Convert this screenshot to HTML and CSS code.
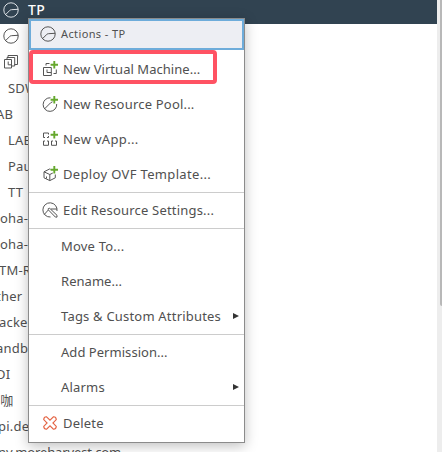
FILE: index.html
```html
<!DOCTYPE html>
<html lang="en">
<head>
<meta charset="utf-8">
<title>Actions</title>
<link rel="stylesheet" href="styles.css">
</head>
<body>
<svg class="defs" width="0" height="0">
  <symbol id="pool" viewBox="0 0 16 16"><circle cx="8" cy="8" r="7.2"/><path d="M2.4 12.8 7 8.2Q7.6 7.7 8.4 7.7L15.2 7.3"/></symbol>
  <symbol id="pool-new" viewBox="0 0 16 16"><path d="M8.5 1.8A6.8 6.8 0 1 0 14.7 8M2.4 13 8.6 6.8 10.5 5.8"/><path class="plus" d="M12.3 0v7.4M8.6 3.7H16"/></symbol>
  <symbol id="vms" viewBox="0 0 16 16"><path d="M5 3.5v-2h9.5v9h-3M1.5 5.5h7v8.5h-7zM4 5.5v-2h7.7v8.5H8.5M5.2 7.5v3.3h3.3"/></symbol>
  <symbol id="vm-new" viewBox="0 0 16 16"><path d="M4 4.5v-2h3.5M1.5 6.5h7.8v8H1.5zM5 8.5v3h4.3M11.5 12.5h2.8V8.5"/><path class="plus" d="M12.3 0v7.4M8.6 3.7H16"/></symbol>
  <symbol id="vapp" viewBox="0 0 16 16"><path d="M6.5 3.5V2H1.5v4.5H3M5 6.5h1.5V5M3 10H1.5v4.3h5V10H5M11 10H9.5v4.3h5V10H13"/><path class="plus" d="M12.3 0v7.4M8.6 3.7H16"/></symbol>
  <symbol id="ovf" viewBox="0 0 16 16"><path d="M8.5 3.3 7.6 3 2 5.8v6l5.8 2.8 5.5-2.8V8.5M2 5.8l5.8 2.7 3-1.5M7.8 8.5v6.1M4.5 10.5v2"/><path class="plus" d="M12.3 0v7.4M8.6 3.7H16"/></symbol>
  <symbol id="edit" viewBox="0 0 16 16"><path d="M15 9A7.1 7.1 0 1 0 8.5 15M2.2 12.5 6.3 8M6.3 7.8V6.6l1.4-.3 7.3 7v1.8h-1.6zM9 7h6"/></symbol>
  <symbol id="delete" viewBox="0 0 16 16"><path class="cross" d="M4.6 1.8 8 5.2l3.4-3.4Q14 1.6 14.3 4.6L10.9 8l3.4 3.4Q14 14.4 11.4 14.2L8 10.8l-3.4 3.4Q2 14.4 1.7 11.4L5.1 8 1.7 4.6Q2 1.6 4.6 1.8z"/></symbol>
</svg>
<div class="app">
  <ul class="tree">
    <li class="row selected"><svg class="icon"><use href="#pool"/></svg><span>TP</span></li>
    <li class="row"><svg class="icon"><use href="#pool"/></svg></li>
    <li class="row"><svg class="icon"><use href="#vms"/></svg></li>
    <li class="row child">SDW</li>
    <li class="row cut-3">AB</li>
    <li class="row child">LAB</li>
    <li class="row child">Paul</li>
    <li class="row child">TT</li>
    <li class="row">oha-</li>
    <li class="row">oha-</li>
    <li class="row cut-1">TM-R</li>
    <li class="row cut-3">ther</li>
    <li class="row cut-1">acker</li>
    <li class="row cut-3">andbo</li>
    <li class="row cut-3">DI</li>
    <li class="row cut-cjk">星咖</li>
    <li class="row cut-2">pi.dev</li>
    <li class="row cut-2"><span class="domain">ny.moreharvest.com</span></li>
  </ul>
  <div class="scrollbar"><div class="thumb"></div></div>
</div>
<div class="menu">
  <div class="title"><svg class="icon"><use href="#pool"/></svg><span>Actions - TP</span></div>
  <div class="group">
    <div class="item"><svg class="icon"><use href="#vm-new"/></svg><span class="tight">New Virtual Machine...</span></div>
    <div class="item"><svg class="icon"><use href="#pool-new"/></svg><span>New Resource Pool...</span></div>
    <div class="item"><svg class="icon"><use href="#vapp"/></svg><span class="wide">New vApp...</span></div>
    <div class="item"><svg class="icon"><use href="#ovf"/></svg><span class="wide">Deploy OVF Template...</span></div>
  </div>
  <div class="group">
    <div class="item"><svg class="icon"><use href="#edit"/></svg><span>Edit Resource Settings...</span></div>
  </div>
  <div class="group">
    <div class="item plain"><span>Move To...</span></div>
    <div class="item plain"><span class="tight">Rename...</span></div>
    <div class="item plain"><span>Tags &amp; Custom Attributes</span><i class="arrow"></i></div>
  </div>
  <div class="group">
    <div class="item plain"><span class="tight">Add Permission...</span></div>
    <div class="item plain"><span>Alarms</span><i class="arrow"></i></div>
  </div>
  <div class="group">
    <div class="item"><svg class="icon"><use href="#delete"/></svg><span>Delete</span></div>
  </div>
  <div class="highlight"></div>
</div>
</body>
</html>
```
FILE: styles.css
```css
* { box-sizing: border-box; }
body {
  margin: 0;
  width: 442px;
  height: 452px;
  overflow: hidden;
  position: relative;
  background: #fff;
  color: #505050;
  font: 13px/26px "Noto Sans", "Noto Sans CJK SC", sans-serif;
  letter-spacing: .2px;
  white-space: nowrap;
}
.defs { position: absolute; }
.icon { width: 16px; height: 16px; flex: none; fill: none; stroke: #555; stroke-width: 1; }
.plus { stroke: #65a82d; stroke-width: 1.9; }
.cross { stroke: #e46343; stroke-width: 1.1; }
.tight { letter-spacing: .04px; }
.wide { letter-spacing: .34px; }

.app { display: flex; height: 452px; }
.tree { flex: 1; margin: -3px 0 0; padding: 0; list-style: none; }
.row { display: flex; align-items: center; height: 26px; }
.row .icon { margin-left: 3px; }
.selected { background: #314351; color: #fff; font-size: 14px; font-weight: 500; letter-spacing: .5px; box-shadow: 0 1px 0 #314351; }
.selected .icon { stroke: #dce1e5; margin-right: 9px; }
.child { padding-left: 8px; }
.cut-1 { margin-left: -1px; }
.cut-2 { margin-left: -2px; }
.cut-3 { margin-left: -4px; }
.cut-cjk { margin-left: -13px; }
.domain { letter-spacing: -.13px; }
.scrollbar { width: 5px; height: 452px; background: #ededed; }
.thumb { width: 2px; height: 306px; margin-left: 3px; background: #b8b8b8; border-bottom-left-radius: 2px; }

.menu {
  position: absolute;
  left: 28px;
  top: 18px;
  width: 217px;
  height: 425px;
  border: 1px solid #8b8b8b;
  background: #fff;
  box-shadow: 0 3px 12px rgba(0, 0, 0, .25);
}
.title {
  display: flex;
  align-items: center;
  height: 31px;
  margin-bottom: 2px;
  padding: 0 0 1px 9px;
  border: 2px solid #6eacda;
  background: #edeef3;
  font-size: 11px;
  letter-spacing: .38px;
}
.title .icon { margin-right: 5px; }
.group + .group { border-top: 1px solid #ccc; }
.item { display: flex; align-items: center; height: 35px; padding: 0 0 2px 13px; }
.item .icon { margin-right: 5px; }
.plain { padding-left: 32px; }
.arrow {
  margin-left: auto;
  margin-right: 5px;
  border-left: 6px solid #333;
  border-top: 3.5px solid transparent;
  border-bottom: 3.5px solid transparent;
}
.highlight {
  position: absolute;
  left: 0;
  top: 31px;
  width: 188px;
  height: 34px;
  border: 4px solid #ff5263;
  border-radius: 4px;
}
```
